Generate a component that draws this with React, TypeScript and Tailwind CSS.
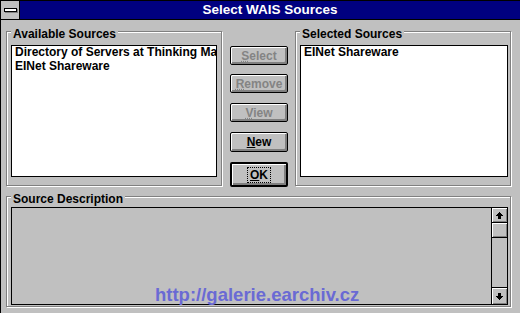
import React from "react";

// pixel-art arrow for the scroll buttons (Win 3.1 style)
function Arrow({ down = false }: { down?: boolean }) {
  return (
    <svg
      width="7"
      height="7"
      viewBox="0 0 7 7"
      shapeRendering="crispEdges"
      style={down ? { transform: "scaleY(-1)" } : undefined}
    >
      <rect x="3" y="0" width="1" height="1" fill="#000" />
      <rect x="2" y="1" width="3" height="1" fill="#000" />
      <rect x="1" y="2" width="5" height="1" fill="#000" />
      <rect x="0" y="3" width="7" height="1" fill="#000" />
      <rect x="2" y="4" width="3" height="3" fill="#000" />
    </svg>
  );
}

function GroupBox({
  label,
  className,
  children,
}: {
  label: string;
  className: string;
  children?: React.ReactNode;
}) {
  return (
    <div
      className={`relative shrink-0 border border-[#808080] shadow-[inset_1px_1px_0_#fff,1px_1px_0_#fff] ${className}`}
    >
      <span className="absolute left-[4px] top-[-5px] bg-[#c0c0c0] px-[2px] text-[12px] font-bold leading-[14px] whitespace-nowrap text-black">
        {label}
      </span>
      {children}
    </div>
  );
}

function Btn({
  label,
  disabled = false,
  isDefault = false,
  className = "",
}: {
  label: string;
  disabled?: boolean;
  isDefault?: boolean;
  className?: string;
}) {
  return (
    <button
      type="button"
      className={`flex w-[58px] items-center justify-center rounded-[2px] border-black bg-[#c0c0c0] text-[12px] font-bold leading-[12px] shadow-[inset_1px_1px_0_#fff,inset_-2px_-2px_0_#808080] ${
        isDefault ? "border-2" : "border"
      } ${disabled ? "text-[#848484]" : "text-black"} ${className}`}
    >
      {isDefault ? (
        <span className="block border border-dotted border-black px-[2px] py-[1px] first-letter:underline">
          {label}
        </span>
      ) : (
        <span
          className={`block first-letter:underline ${
            disabled ? "first-letter:decoration-dotted" : ""
          }`}
        >
          {label}
        </span>
      )}
    </button>
  );
}

export default function App() {
  return (
    <div className="relative h-[313px] w-[520px] overflow-hidden border-l border-t border-black bg-[#c0c0c0] font-['Liberation_Sans',Arial,sans-serif] text-black select-none">
      {/* Title bar */}
      <div className="flex h-[19px] border-b border-black">
        <div className="flex w-[19px] items-center justify-center border-r border-black bg-[#c0c0c0]">
          <div className="h-[4px] w-[13px] border border-black bg-white shadow-[1px_1px_0_#808080]" />
        </div>
        <div className="flex flex-1 items-center justify-center bg-[#000080] text-[13.5px] font-bold leading-[18px] text-white">
          Select WAIS Sources
        </div>
      </div>

      {/* Body */}
      <div className="pl-[5px] pt-[11px]">
        <div className="flex h-[155px] items-start">
          <GroupBox label="Available Sources" className="h-[155px] w-[216px]">
            <div className="ml-[4px] mt-[13px] h-[132px] w-[206px] overflow-hidden border border-black bg-white pl-[3px] text-[12px] font-bold leading-[13.5px] whitespace-nowrap">
              <div>Directory of Servers at Thinking Ma</div>
              <div>EINet Shareware</div>
            </div>
          </GroupBox>

          <div className="ml-[8px] flex flex-col">
            <Btn disabled label="Select" className="mt-[15px] h-[19px]" />
            <Btn disabled label="Remove" className="mt-[9px] h-[19px]" />
            <Btn disabled label="View" className="mt-[10px] h-[19px]" />
            <Btn label="New" className="mt-[10px] h-[20px]" />
            <Btn isDefault label="OK" className="mt-[10px] h-[25px]" />
          </div>

          <GroupBox label="Selected Sources" className="ml-[7px] h-[155px] w-[216px]">
            <div className="ml-[4px] mt-[13px] h-[132px] w-[208px] overflow-hidden border border-black bg-white pl-[3px] text-[12px] font-bold leading-[13.5px] whitespace-nowrap">
              <div>EINet Shareware</div>
            </div>
          </GroupBox>
        </div>

        <GroupBox label="Source Description" className="mt-[10px] h-[111px] w-[505px]">
          <div className="ml-[4px] mt-[10px] flex h-[98px] w-[497px] border border-black bg-[#c0c0c0]">
            <div className="flex-1" />
            {/* vertical scrollbar */}
            <div className="flex w-[16px] flex-col border-l border-black">
              <div className="flex h-[15px] items-center justify-center border-b border-black shadow-[inset_1px_1px_0_#fff,inset_-1px_-1px_0_#808080]">
                <Arrow />
              </div>
              <div className="h-[15px] border-b border-black shadow-[inset_1px_1px_0_#fff,inset_-1px_-1px_0_#808080]" />
              <div className="flex-1" />
              <div className="flex h-[17px] items-center justify-center border-t border-black shadow-[inset_1px_1px_0_#fff,inset_-1px_-1px_0_#808080]">
                <Arrow down />
              </div>
            </div>
          </div>
        </GroupBox>
      </div>

      {/* watermark */}
      <div className="absolute left-[154px] top-[285px] text-[18.5px] font-bold leading-none whitespace-nowrap text-[#6a6ad4]">
        http://galerie.earchiv.cz
      </div>
    </div>
  );
}
